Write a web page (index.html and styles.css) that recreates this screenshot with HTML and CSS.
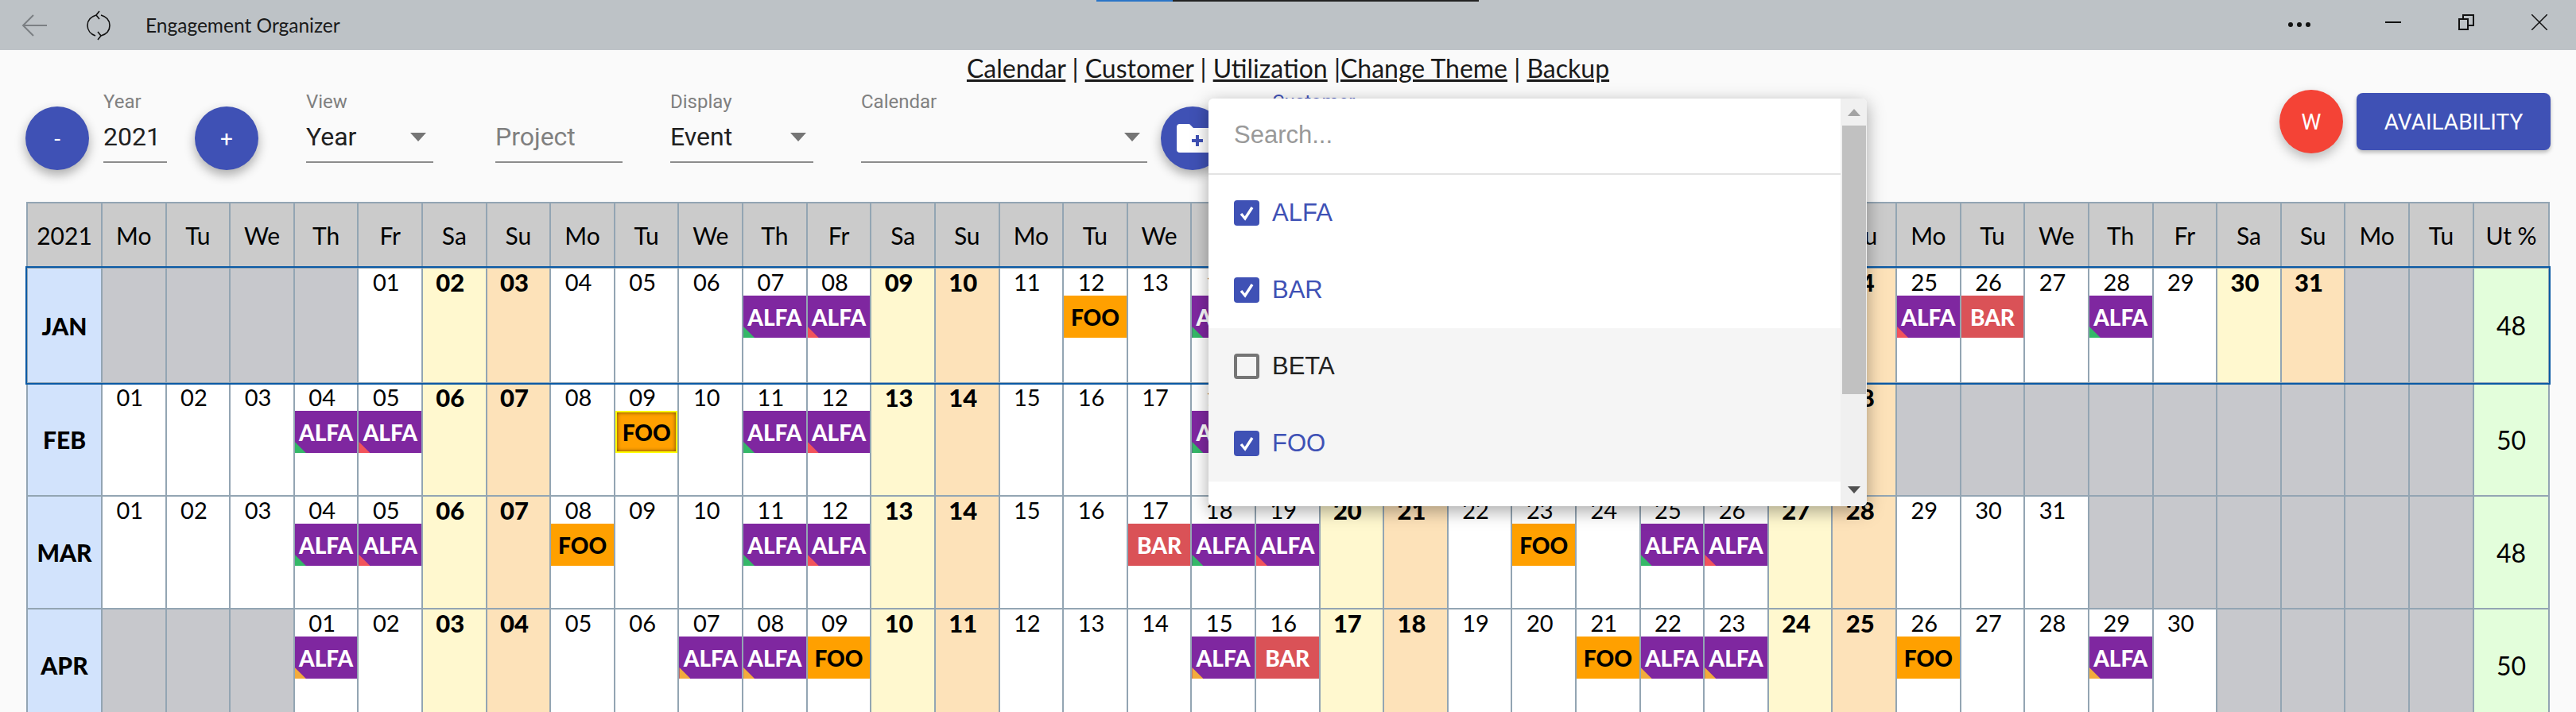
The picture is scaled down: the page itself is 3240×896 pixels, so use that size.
FILE: index.html
```html
<!DOCTYPE html>
<html>
<head>
  <meta charset="utf-8">
  <title>Engagement Organizer</title>
  <link rel="stylesheet" href="styles.css">
</head>
<body>

  <!-- Barra de la ventana -->
  <header class="titlebar">
    <div class="load-strip"><span class="load-blue"></span><span class="load-dark"></span></div>
    <svg class="back-icon" width="34" height="30" viewBox="0 0 34 30"><path d="M32 15H2M15 2L2 15l13 13" fill="none" stroke="#7b7f83" stroke-width="2"/></svg>
    <svg class="sync-icon" width="32" height="38" viewBox="0 0 32 38"><path d="M13 6C6 8 2 13 2 19c0 6 4 11 10 13M19 32c7-2 11-7 11-13 0-6-4-11-11-13M17 1l-4 5 4 5M15 27l4 5-4 5" fill="none" stroke="#111" stroke-width="1.6"/></svg>
    <span class="app-title">Engagement Organizer</span>
    <div class="win-controls">
      <span class="win-more"><i></i><i></i><i></i></span>
      <span class="win-btn"><svg width="20" height="20" viewBox="0 0 20 20"><path d="M0 10h20" stroke="#111" stroke-width="2"/></svg></span>
      <span class="win-btn"><svg width="20" height="20" viewBox="0 0 20 20"><path d="M1 6h11v13H1zM6 6V1h13v13h-7" fill="none" stroke="#111" stroke-width="2"/></svg></span>
      <span class="win-btn"><svg width="20" height="20" viewBox="0 0 20 20"><path d="M0 0l20 20M20 0L0 20" fill="none" stroke="#111" stroke-width="1.5"/></svg></span>
    </div>
  </header>

  <main class="page">
    <nav class="top-nav">
      <a href="#">Calendar</a> | <a href="#">Customer</a> | <a href="#">Utilization</a> |<a href="#">Change Theme</a> | <a href="#">Backup</a>
    </nav>

    <section class="toolbar">
      <button class="round-btn">-</button>
      <div class="field field-year">
        <label>Year</label>
        <div class="field-value">2021</div>
      </div>
      <button class="round-btn btn-plus">+</button>
      <div class="field field-view">
        <label>View</label>
        <div class="field-value">Year<span class="caret"></span></div>
      </div>
      <div class="field field-project">
        <label>&nbsp;</label>
        <div class="field-value placeholder">Project</div>
      </div>
      <div class="field field-display">
        <label>Display</label>
        <div class="field-value">Event<span class="caret"></span></div>
      </div>
      <div class="field field-calendar">
        <label>Calendar</label>
        <div class="field-value"><span class="caret"></span></div>
      </div>
      <button class="round-btn btn-folder">
        <svg width="44" height="36" viewBox="0 0 44 36"><path d="M4 0h12l5 5h19a4 4 0 0 1 4 4v23a4 4 0 0 1-4 4H4a4 4 0 0 1-4-4V4a4 4 0 0 1 4-4z" fill="#fff"/><path d="M26 14v14M19 21h14" stroke="#3f51b5" stroke-width="4"/></svg>
      </button>
      <div class="field field-customer">
        <label>Customer</label>
      </div>
      <div class="toolbar-right">
        <span class="avatar">W</span>
        <button class="availability">AVAILABILITY</button>
      </div>
    </section>

    <!-- Lista abierta de clientes -->
    <div class="customer-panel">
      <div class="panel-body">
        <div class="panel-search">Search...</div>
        <div class="panel-item checked"><span class="check"><svg width="20" height="20" viewBox="0 0 20 20"><path d="M3 11l5 6L17 3" fill="none" stroke="#fff" stroke-width="3.4"/></svg></span>ALFA</div>
        <div class="panel-item checked"><span class="check"><svg width="20" height="20" viewBox="0 0 20 20"><path d="M3 11l5 6L17 3" fill="none" stroke="#fff" stroke-width="3.4"/></svg></span>BAR</div>
        <div class="panel-item hover"><span class="check"></span>BETA</div>
        <div class="panel-item checked hover"><span class="check"><svg width="20" height="20" viewBox="0 0 20 20"><path d="M3 11l5 6L17 3" fill="none" stroke="#fff" stroke-width="3.4"/></svg></span>FOO</div>
      </div>
      <div class="panel-scroll">
        <span class="arrow-up"></span>
        <span class="scroll-thumb"></span>
        <span class="arrow-down"></span>
      </div>
    </div>

    <table class="calendar" id="calendario">
      <thead><tr></tr></thead>
      <tbody></tbody>
    </table>
  </main>

  <script>
    const dias = ['Mo', 'Tu', 'We', 'Th', 'Fr', 'Sa', 'Su'];
    const totalCols = 37;

    // a = ALFA, b = BAR, f = FOO; la marca es la esquina de ALFA
    const meses = [
      { nombre: 'JAN', inicio: 4, dias: 31, ut: 48, actual: true, eventos: {
        7: 'a-green', 8: 'a-red', 12: 'f', 14: 'a-green', 15: 'a-red', 19: 'f', 21: 'a-green', 25: 'a-red', 26: 'b', 28: 'a-green' } },
      { nombre: 'FEB', inicio: 0, dias: 28, ut: 50, eventos: {
        4: 'a-green', 5: 'a-red', 9: 'f-selected', 11: 'a-green', 12: 'a-red', 18: 'a-green', 19: 'a-red', 23: 'f', 25: 'a-green' } },
      { nombre: 'MAR', inicio: 0, dias: 31, ut: 48, eventos: {
        4: 'a-green', 5: 'a-red', 8: 'f', 11: 'a-green', 12: 'a-red', 17: 'b', 18: 'a-green', 19: 'a-red', 23: 'f', 25: 'a-green', 26: 'a-red' } },
      { nombre: 'APR', inicio: 3, dias: 30, ut: 50, eventos: {
        1: 'a-orange', 7: 'a-orange', 8: 'a-orange', 9: 'f', 15: 'a-orange', 16: 'b', 21: 'f', 22: 'a-orange', 23: 'a-orange', 26: 'f', 29: 'a-orange' } }
    ];

    const nombres = { a: 'ALFA', b: 'BAR', f: 'FOO' };

    const chipHtml = (codigo) => {
      const [tipo, extra] = codigo.split('-');
      const clases = ['chip', 'chip-' + nombres[tipo].toLowerCase()];
      if (extra) clases.push(extra === 'selected' ? 'selected' : 'mark-' + extra);
      return `<div class="${clases.join(' ')}">${nombres[tipo]}</div>`;
    };

    // Cabecera
    let cabecera = '<th class="col-month">2021</th>';
    for (let i = 0; i < totalCols; i++) cabecera += `<th>${dias[i % 7]}</th>`;
    cabecera += '<th class="col-ut">Ut %</th>';
    document.querySelector('#calendario thead tr').innerHTML = cabecera;

    // Filas de cada mes
    const cuerpo = document.querySelector('#calendario tbody');
    meses.forEach(mes => {
      const row = document.createElement('tr');
      if (mes.actual) row.className = 'current';
      let html = `<td class="month">${mes.nombre}</td>`;
      for (let col = 0; col < totalCols; col++) {
        const dia = col - mes.inicio + 1;
        if (dia < 1 || dia > mes.dias) {
          html += '<td class="empty"></td>';
          continue;
        }
        const clase = col % 7 === 5 ? 'sat' : col % 7 === 6 ? 'sun' : '';
        const chip = mes.eventos[dia] ? chipHtml(mes.eventos[dia]) : '';
        html += `<td class="${clase}"><div class="day-num">${String(dia).padStart(2, '0')}</div>${chip}</td>`;
      }
      html += `<td class="ut">${mes.ut}</td>`;
      row.innerHTML = html;
      cuerpo.appendChild(row);
    });
  </script>

</body>
</html>
```

FILE: styles.css
```css
* {
  box-sizing: border-box;
}
html, body {
  height: 896px;
  overflow: hidden;
}
body {
  margin: 0;
  background: #fafafa;
  color: #212121;
  font-family: Roboto, Arial, sans-serif;
}

/* barra de la ventana */
.titlebar {
  position: relative;
  display: flex;
  align-items: center;
  height: 63px;
  background: #bdc2c6;
}
.load-strip {
  position: absolute;
  top: 0;
  left: 1379px;
  display: flex;
  height: 2px;
}
.load-blue {
  width: 96px;
  background: #2a75c7;
}
.load-dark {
  width: 385px;
  background: #222;
}
.back-icon {
  margin-left: 27px;
}
.sync-icon {
  margin-left: 47px;
}
.app-title {
  margin-left: 43px;
  font-family: Lato, sans-serif;
  font-size: 24.5px;
  color: #1a1a1a;
}
.win-controls {
  display: flex;
  align-items: center;
  margin-left: auto;
  padding-bottom: 8px;
}
.win-more {
  display: flex;
  gap: 5px;
  margin-right: 58px;
  padding-top: 6px;
}
.win-more i {
  width: 6px;
  height: 6px;
  border-radius: 50%;
  background: #111;
}
.win-btn {
  display: flex;
  justify-content: center;
  width: 92px;
}

.page {
  position: relative;
}

.top-nav {
  height: 50px;
  padding-top: 4px;
  text-align: center;
  font-family: Lato, sans-serif;
  font-size: 32px;
  line-height: 38px;
  color: #1a1a1a;
}
.top-nav a {
  color: #1a1a1a;
  text-decoration: underline;
}

/* controles */
.toolbar {
  display: flex;
  align-items: flex-start;
  height: 141px;
  padding: 0 32px;
}
.round-btn {
  display: flex;
  align-items: center;
  justify-content: center;
  flex: none;
  width: 80px;
  height: 80px;
  margin-top: 21px;
  border: none;
  border-radius: 50%;
  background: #3f51b5;
  color: #fff;
  font-family: Roboto, sans-serif;
  font-size: 28px;
  box-shadow: 0 6px 14px rgba(0, 0, 0, 0.32);
}
.btn-plus {
  margin-left: 35px;
}
.btn-folder {
  margin-left: 17px;
  justify-content: flex-start;
  padding-left: 20px;
}
.field {
  flex: none;
  margin-top: 1px;
}
.field label {
  display: block;
  height: 28px;
  font-size: 24px;
  line-height: 28px;
  color: #808080;
}
.field-value {
  position: relative;
  height: 63px;
  padding-top: 10px;
  border-bottom: 2px solid #8c8c8c;
  font-size: 32px;
  line-height: 40px;
  color: #212121;
}
.placeholder {
  color: #808080;
}
.caret {
  position: absolute;
  top: 25px;
  right: 9px;
  border-left: 10px solid transparent;
  border-right: 10px solid transparent;
  border-top: 11px solid #757575;
}
.field-year {
  width: 80px;
  margin-left: 18px;
}
.field-view {
  width: 160px;
  margin-left: 60px;
}
.field-project {
  width: 160px;
  margin-left: 78px;
}
.field-display {
  width: 180px;
  margin-left: 60px;
}
.field-calendar {
  width: 360px;
  margin-left: 60px;
}
.field-customer {
  margin-left: 60px;
}
.field-customer label {
  color: #3f51b5;
}
.toolbar-right {
  display: flex;
  align-items: center;
  gap: 17px;
  margin-left: auto;
}
.avatar {
  display: flex;
  align-items: center;
  justify-content: center;
  width: 80px;
  height: 80px;
  border-radius: 50%;
  background: #f44336;
  color: #fff;
  font-size: 28px;
  box-shadow: 0 6px 14px rgba(0, 0, 0, 0.25);
}
.availability {
  width: 244px;
  height: 72px;
  border: none;
  border-radius: 8px;
  background: #3f51b5;
  color: #fff;
  font-family: Roboto, sans-serif;
  font-size: 28px;
  box-shadow: 0 3px 5px rgba(0, 0, 0, 0.25);
}

/* desplegable de clientes */
.customer-panel {
  position: absolute;
  top: 61px;
  left: 1520px;
  z-index: 5;
  display: flex;
  width: 828px;
  height: 513px;
  border-radius: 6px;
  overflow: hidden;
  background: #fff;
  box-shadow: 0 6px 22px rgba(0, 0, 0, 0.35);
  font-family: "Liberation Sans", Arial, sans-serif;
  font-size: 31px;
}
.panel-body {
  flex: 1;
}
.panel-search {
  height: 96px;
  padding: 28px 32px 0;
  border-bottom: 2px solid #e3e3e3;
  color: #999;
}
.panel-item {
  display: flex;
  align-items: center;
  gap: 16px;
  height: 96.5px;
  padding-left: 32px;
  color: #212121;
}
.panel-item.checked {
  color: #3f51b5;
}
.panel-item.hover {
  background: #f5f5f5;
}
.check {
  display: flex;
  align-items: center;
  justify-content: center;
  width: 32px;
  height: 32px;
  border: 4px solid #757575;
  border-radius: 4px;
}
.checked .check {
  border: none;
  background: #3f51b5;
}
.panel-scroll {
  display: flex;
  flex-direction: column;
  align-items: center;
  flex: none;
  width: 33px;
  padding-top: 13px;
  background: #f0f0f0;
}
.arrow-up {
  border-left: 8px solid transparent;
  border-right: 8px solid transparent;
  border-bottom: 9px solid #a3a3a3;
}
.scroll-thumb {
  width: 30px;
  height: 338px;
  margin-top: 12px;
  background: #c1c1c1;
}
.arrow-down {
  margin-top: 116px;
  border-left: 8px solid transparent;
  border-right: 8px solid transparent;
  border-top: 9px solid #505050;
}

/* calendario */
.calendar {
  width: 3174px;
  margin-left: 33px;
  table-layout: fixed;
  border-collapse: collapse;
  font-family: Lato, sans-serif;
  color: #000;
}
.calendar th, .calendar td {
  padding: 0;
  border: 2px solid #93a5b3;
}
.calendar th {
  height: 82px;
  background: #cbcbcb;
  font-size: 30px;
  font-weight: 400;
}
.col-month {
  width: 94px;
}
.col-ut {
  width: 95px;
}
.calendar td {
  height: 142px;
  vertical-align: top;
  background: #fff;
}
.calendar tr.current {
  outline: 2px solid #0b5aa5;
}
.calendar tr.current td {
  height: 145px;
}
.calendar td.month {
  vertical-align: middle;
  text-align: center;
  background: #d2e3fc;
  font-size: 30px;
  font-weight: 900;
}
.calendar td.ut {
  vertical-align: middle;
  text-align: center;
  background: #e3fedb;
  font-size: 32px;
}
.calendar td.empty {
  background: #c7c8cc;
}
.calendar td.sat {
  background: #fff8cf;
}
.calendar td.sun {
  background: #fde2b9;
}
.sat .day-num, .sun .day-num {
  font-size: 31px;
  font-weight: 900;
}
.day-num {
  height: 34px;
  padding-right: 10px;
  text-align: center;
  font-size: 29px;
  line-height: 34px;
}
.chip {
  position: relative;
  display: flex;
  align-items: center;
  justify-content: center;
  height: 53px;
  font-size: 28px;
  font-weight: 900;
}
.chip-alfa {
  background: #7f27a0;
  color: #fff;
}
.chip-bar {
  background: #da5257;
  color: #fff;
}
.chip-foo {
  background: #ffa000;
  color: #000;
}
.chip.selected {
  border: 2px solid #ffff00;
  box-shadow: inset 0 0 5px rgba(0, 0, 0, 0.6);
}
.chip[class*="mark-"]::after {
  content: "";
  position: absolute;
  left: 0;
  bottom: 0;
  width: 14px;
  height: 14px;
  clip-path: polygon(0 0, 100% 100%, 0 100%);
}
.mark-green::after {
  background: #35b868;
}
.mark-red::after {
  background: #f2545b;
}
.mark-orange::after {
  background: #f2ab3c;
}
```
